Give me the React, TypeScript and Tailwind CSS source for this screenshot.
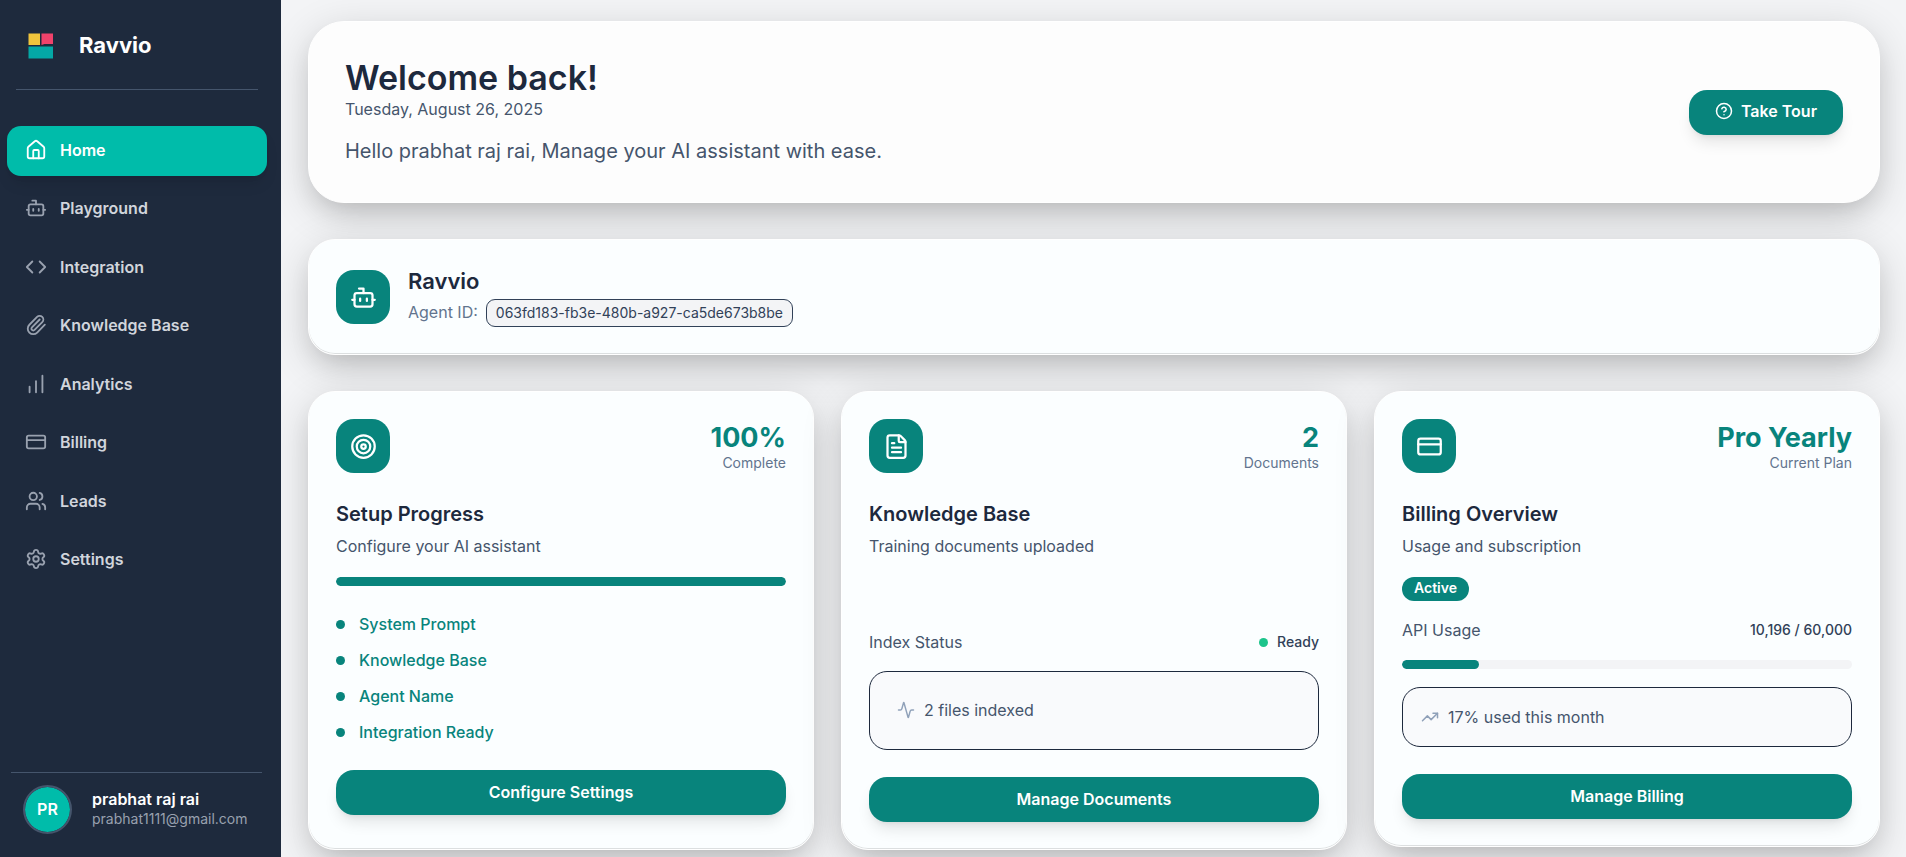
import React, { useState } from 'react';
import {
  Activity,
  Bot,
  ChartNoAxesColumnIncreasing,
  CircleQuestionMark,
  Code,
  CreditCard,
  FileText,
  House,
  Paperclip,
  Settings,
  Target,
  TrendingUp,
  Users,
  type LucideIcon,
} from 'lucide-react';

const navItems: { label: string; icon: LucideIcon }[] = [
  { label: 'Home', icon: House },
  { label: 'Playground', icon: Bot },
  { label: 'Integration', icon: Code },
  { label: 'Knowledge Base', icon: Paperclip },
  { label: 'Analytics', icon: ChartNoAxesColumnIncreasing },
  { label: 'Billing', icon: CreditCard },
  { label: 'Leads', icon: Users },
  { label: 'Settings', icon: Settings },
];

const setupSteps = ['System Prompt', 'Knowledge Base', 'Agent Name', 'Integration Ready'];

const Logo: React.FC = () => (
  <svg width="26" height="26" viewBox="0 0 26 26" aria-hidden="true">
    <rect x="0.5" y="0.5" width="11.5" height="11.5" fill="#f0c43c" />
    <path d="M13.5 0.5H25V11H16.5L13.5 12Z" fill="#f0426b" />
    <rect x="0.5" y="13.5" width="24.5" height="12" fill="#04a8a6" />
  </svg>
);

const Sidebar: React.FC = () => {
  const [active, setActive] = useState('Home');

  return (
    <aside className="z-10 flex w-[281px] shrink-0 flex-col bg-[#1e2a3d]">
      <div className="mr-[23px] ml-4 flex h-[90px] items-center gap-[25px] border-b border-slate-600 pt-0.5 pl-3">
        <Logo />
        <span className="text-[22px] font-bold text-white">Ravvio</span>
      </div>

      <nav className="mt-9 mr-[14px] ml-[7px] flex h-[459px] flex-col gap-[9px]">
        {navItems.map(({ label, icon: Icon }) => (
          <a
            key={label}
            href="#"
            onClick={() => setActive(label)}
            className={`flex flex-1 items-center gap-[13px] rounded-[14px] px-[18px] pb-0.5 text-[16px] font-semibold ${
              active === label ? 'bg-[#00bcaa] text-white shadow-lg' : 'text-gray-300'
            }`}
          >
            <Icon size={22} className={active === label ? 'text-white' : 'text-gray-400'} />
            {label}
          </a>
        ))}
      </nav>

      <div className="mr-[19px] ml-[11px] mt-auto flex h-[85px] items-start gap-5 border-t border-slate-600 pt-3 pl-3">
        <div className="flex h-[49px] w-[49px] shrink-0 items-center justify-center rounded-full border-2 border-slate-600 bg-[#00bcaa] bg-clip-padding pb-0.5 text-[16px] font-semibold text-white">
          PR
        </div>
        <div className="pt-1">
          <p className="text-[16px] leading-5 font-semibold text-white">prabhat raj rai</p>
          <p className="text-[14px] leading-5 text-gray-400">prabhat1111@gmail.com</p>
        </div>
      </div>
    </aside>
  );
};

const IconTile: React.FC<{ icon: LucideIcon }> = ({ icon: Icon }) => (
  <div className="flex h-[54px] w-[54px] shrink-0 items-center justify-center rounded-[18px] bg-[#08847c] text-white">
    <Icon size={27} />
  </div>
);

const cardClass =
  'rounded-[27px] border border-white bg-[#fbfeff] p-[27px] shadow-[inset_0_-1px_0_rgba(0,0,0,0.12),0_10px_40px_rgba(0,0,0,0.16),0_14px_28px_-10px_rgba(0,0,0,0.16)]';

const ActionButton: React.FC<{ children: React.ReactNode }> = ({ children }) => (
  <button
    type="button"
    className="mt-[27px] h-[45px] w-full rounded-[18px] bg-[#08847c] pb-0.5 text-[16px] font-semibold text-white shadow-lg hover:bg-teal-800"
  >
    {children}
  </button>
);

interface StatCardProps {
  icon: LucideIcon;
  value: string;
  caption: string;
  title: string;
  description: string;
  className?: string;
  children: React.ReactNode;
}

const StatCard: React.FC<StatCardProps> = ({ icon, value, caption, title, description, className = '', children }) => (
  <section className={`${cardClass} ${className}`}>
    <div className="flex justify-between">
      <IconTile icon={icon} />
      <div className="text-right">
        <p className="text-[27px] leading-[38px] font-bold text-[#08847c]">{value}</p>
        <p className="text-[14px] leading-3 text-slate-500">{caption}</p>
      </div>
    </div>
    <h3 className="mt-[27px] text-[20px] leading-7 font-semibold text-slate-800">{title}</h3>
    <p className="mt-[7px] pb-0.5 text-[16px] leading-[22px] text-slate-600">{description}</p>
    {children}
  </section>
);

const ProgressBar: React.FC<{ value: number; label: string }> = ({ value, label }) => (
  <div
    role="progressbar"
    aria-label={label}
    aria-valuenow={value}
    className="mt-[18px] h-[9px] overflow-hidden rounded-full bg-gray-100"
  >
    <div className="h-full rounded-full bg-[#08847c]" style={{ width: `${value}%` }} />
  </div>
);

const App: React.FC = () => {
  return (
    <div className="flex h-screen overflow-hidden bg-gray-100 font-['Inter',sans-serif]">
      <Sidebar />

      <main className="min-w-0 flex-1 overflow-hidden pt-[21px] pr-[26px] pl-[27px]">
        <header className="flex items-center justify-between rounded-[36px] border border-white bg-[#fdfdfd] p-9 shadow-[0_10px_40px_rgba(0,0,0,0.16),0_14px_28px_-10px_rgba(0,0,0,0.16)]">
          <div>
            <h1 className="text-[34px] leading-10 font-semibold text-slate-800">Welcome back!</h1>
            <p className="text-[16px] leading-[22px] text-slate-600">Tuesday, August 26, 2025</p>
            <p className="mt-4 text-[20px] leading-[30px] text-slate-600">
              Hello prabhat raj rai, Manage your AI assistant with ease.
            </p>
          </div>
          <button
            type="button"
            className="flex h-[45px] items-center gap-2 rounded-[18px] bg-[#08847c] px-[26px] pb-0.5 text-[16px] font-semibold text-white shadow-lg hover:bg-teal-800"
          >
            <CircleQuestionMark size={18} />
            Take Tour
          </button>
        </header>

        <section className={`mt-9 flex items-center gap-[18px] ${cardClass}`}>
          <IconTile icon={Bot} />
          <div>
            <h2 className="text-[22px] leading-7 font-semibold text-slate-800">Ravvio</h2>
            <div className="mt-1 flex items-center gap-2">
              <span className="pb-0.5 text-[16px] leading-[22px] text-slate-500">Agent ID:</span>
              <code className="flex h-7 items-center rounded-[9px] border border-slate-700 bg-gray-100 px-[9px] pb-0.5 font-['Inter',sans-serif] text-[14px] text-slate-700">
                063fd183-fb3e-480b-a927-ca5de673b8be
              </code>
            </div>
          </div>
        </section>

        <div className="mt-9 grid grid-cols-3 gap-[27px]">
          <StatCard
            icon={Target}
            value="100%"
            caption="Complete"
            title="Setup Progress"
            description="Configure your AI assistant"
          >
            <ProgressBar value={100} label="Setup progress" />
            <ul className="mt-[27px] flex flex-col gap-[14px]">
              {setupSteps.map((step) => (
                <li key={step} className="flex items-center gap-[14px] text-[16px] leading-[22px] font-medium text-[#08847c]">
                  <span className="h-[9px] w-[9px] rounded-full bg-[#08847c]" />
                  {step}
                </li>
              ))}
            </ul>
            <ActionButton>Configure Settings</ActionButton>
          </StatCard>

          <StatCard
            icon={FileText}
            value="2"
            caption="Documents"
            title="Knowledge Base"
            description="Training documents uploaded"
          >
            <div className="mt-[72px] flex items-center justify-between leading-[22px]">
              <span className="text-[16px] text-slate-600">Index Status</span>
              <span className="flex items-center gap-[9px] text-[14px] font-medium text-slate-700">
                <span className="h-[9px] w-[9px] rounded-full bg-[#1cc48b]" />
                Ready
              </span>
            </div>
            <div className="mt-[18px] flex h-[79px] items-center gap-[9px] rounded-[18px] border border-slate-800 bg-[#f9fafc] px-[27px] pb-0.5 text-[16px] text-slate-600">
              <Activity size={18} className="text-slate-400" />
              2 files indexed
            </div>
            <ActionButton>Manage Documents</ActionButton>
          </StatCard>

          <StatCard
            icon={CreditCard}
            value="Pro Yearly"
            caption="Current Plan"
            title="Billing Overview"
            description="Usage and subscription"
            className="self-start"
          >
            <div className="mt-[18px] flex">
              <span className="h-6 rounded-full bg-[#08847c] px-3 text-[14px] leading-[22px] font-semibold text-white">Active</span>
            </div>
            <div className="mt-[18px] mb-[19px] flex items-center justify-between leading-[22px]">
              <span className="text-[16px] text-slate-600">API Usage</span>
              <span className="text-[14px] font-medium text-slate-700">10,196 / 60,000</span>
            </div>
            <ProgressBar value={17} label="API usage" />
            <div className="mt-[18px] flex h-[60px] items-center gap-[9px] rounded-[18px] border border-slate-800 bg-[#f9fafc] px-[18px] text-[16px] text-slate-600">
              <TrendingUp size={18} className="text-slate-400" />
              17% used this month
            </div>
            <ActionButton>Manage Billing</ActionButton>
          </StatCard>
        </div>
      </main>
    </div>
  );
};

export default App;
